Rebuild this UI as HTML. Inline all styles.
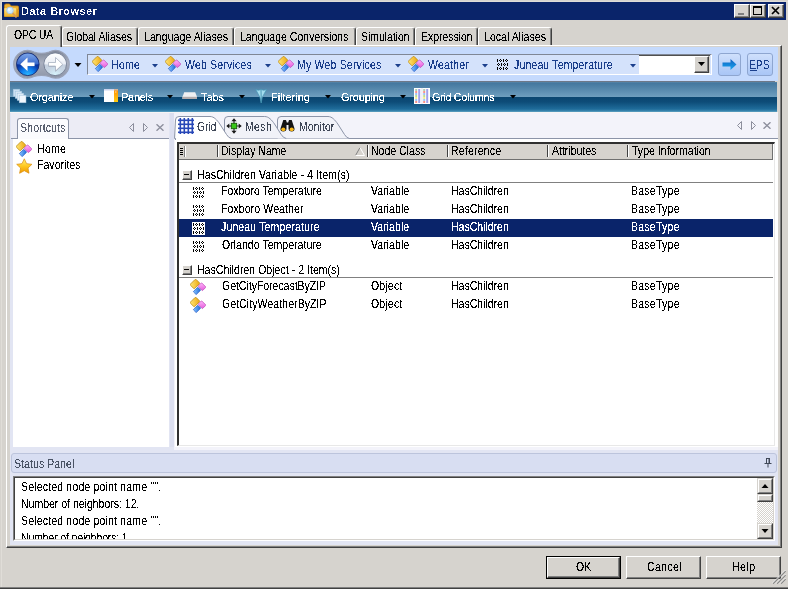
<!DOCTYPE html>
<html><head><meta charset="utf-8"><title>Data Browser</title>
<style>
html,body{margin:0;padding:0}
body{width:788px;height:590px;overflow:hidden;background:#d6d3ce;position:relative;font-family:"Liberation Sans",sans-serif;font-size:11px}
div,svg,span.t{position:absolute;box-sizing:border-box}
span.t{white-space:pre;line-height:13px;filter:url(#th)}
</style></head><body>
<svg width="0" height="0" style="left:0;top:0"><filter id="th" x="-0.05" y="-0.25" width="1.1" height="1.5" color-interpolation-filters="sRGB"><feComponentTransfer><feFuncA type="discrete" tableValues="0 0 0 0 0 0 0 0 0 1 1 1 1 1 1 1 1 1 1 1"/></feComponentTransfer></filter><filter id="th2" x="-0.05" y="-0.25" width="1.1" height="1.5" color-interpolation-filters="sRGB"><feComponentTransfer><feFuncA type="discrete" tableValues="0 0 0 0 0 0 0 0 0 0 0 0 1 1 1 1 1 1 1 1"/></feComponentTransfer></filter></svg>
<div style="left:1px;top:1px;width:787px;height:1px;background:#e0ddd8;"></div><div style="left:1px;top:1px;width:1px;height:586px;background:#e0ddd8;"></div><div style="left:2px;top:2px;width:784px;height:18px;background:#0a246a;"></div><svg style="left:3px;top:3px;" width="17" height="15" viewBox="0 0 17 15"><defs><linearGradient id="fo" x1="0" y1="0" x2="0" y2="1"><stop offset="0" stop-color="#ffe68a"/><stop offset="1" stop-color="#f0b028"/></linearGradient></defs>
<path d="M1.500 2.500q0 -1.500 1.500 -1.500h3.500l1.500 2h6.500q1 0 1 1v9.500h-14z" fill="#eeb030" stroke="#c88818" stroke-width="0.8"/>
<path d="M1.300 5.200h11.200l1.500 1v7.300h-12.700z" fill="url(#fo)"/>
<path d="M13.300 5.500l2.700 1.500l-1 6.500h-1.700z" fill="#e09a20"/>
<path d="M9.300 9.800l4.200 4.700" stroke="#d8985c" stroke-width="1.700"/>
<circle cx="7" cy="7.400" r="3.300" fill="#d2eafc" stroke="#a4c4e4" stroke-width="0.9"/>
<circle cx="6.200" cy="6.600" r="1.300" fill="#fff" opacity="0.8"/></svg><span class="t" style="left:21px;top:5px;font-size:11px;color:#fff;letter-spacing:0.447px;font-weight:700;filter:url(#th2);">Data Browser</span><div style="left:734px;top:4px;width:16px;height:14px;background:#d6d3ce;border-top:1px solid #fff;border-left:1px solid #fff;border-right:1px solid #404040;border-bottom:1px solid #404040;"></div><div style="left:735px;top:5px;width:14px;height:12px;border-right:1px solid #808080;border-bottom:1px solid #808080;"></div><svg style="left:734px;top:4px;" width="16" height="14" viewBox="0 0 16 14"><rect x="4" y="9" width="6" height="2" fill="#808080"/></svg><div style="left:750px;top:4px;width:16px;height:14px;background:#d6d3ce;border-top:1px solid #fff;border-left:1px solid #fff;border-right:1px solid #404040;border-bottom:1px solid #404040;"></div><div style="left:751px;top:5px;width:14px;height:12px;border-right:1px solid #808080;border-bottom:1px solid #808080;"></div><svg style="left:750px;top:4px;" width="16" height="14" viewBox="0 0 16 14"><rect x="3.5" y="3" width="8" height="7.5" fill="none" stroke="#000" stroke-width="1"/><rect x="3" y="2" width="9" height="2" fill="#000"/></svg><div style="left:768px;top:4px;width:16px;height:14px;background:#d6d3ce;border-top:1px solid #fff;border-left:1px solid #fff;border-right:1px solid #404040;border-bottom:1px solid #404040;"></div><div style="left:769px;top:5px;width:14px;height:12px;border-right:1px solid #808080;border-bottom:1px solid #808080;"></div><svg style="left:768px;top:4px;" width="16" height="14" viewBox="0 0 16 14"><path d="M4 3l7 7M11 3l-7 7" stroke="#000" stroke-width="1.7"/></svg><div style="left:6px;top:45px;width:776px;height:503px;background:#d6d3ce;border-top:1px solid #fff;border-left:1px solid #fff;border-right:1px solid #404040;border-bottom:1px solid #404040;"></div><div style="left:7px;top:46px;width:774px;height:501px;border-right:1px solid #808080;border-bottom:1px solid #808080;"></div><div style="left:6px;top:25px;width:56px;height:22px;background:#d6d3ce;border-top:1px solid #fff;border-left:1px solid #fff;border-right:1px solid #404040;border-radius:3px 3px 0 0;"></div><div style="left:7px;top:26px;width:54px;height:21px;border-right:1px solid #808080;border-radius:0 2px 0 0;"></div><span class="t" style="left:14px;top:29px;font-size:10.5px;color:#000;letter-spacing:-0.221px;transform:scaleY(1.19);transform-origin:0 10px;">OPC UA</span><div style="left:62px;top:27px;width:76px;height:18px;background:#d6d3ce;border-top:1px solid #fff;border-left:1px solid #fff;border-right:1px solid #404040;border-radius:3px 3px 0 0;"></div><div style="left:63px;top:28px;width:74px;height:17px;border-right:1px solid #808080;border-radius:0 2px 0 0;"></div><span class="t" style="left:66px;top:31px;font-size:10.5px;color:#000;letter-spacing:-0.044px;transform:scaleY(1.19);transform-origin:0 10px;">Global Aliases</span><div style="left:138px;top:27px;width:96px;height:18px;background:#d6d3ce;border-top:1px solid #fff;border-left:1px solid #fff;border-right:1px solid #404040;border-radius:3px 3px 0 0;"></div><div style="left:139px;top:28px;width:94px;height:17px;border-right:1px solid #808080;border-radius:0 2px 0 0;"></div><span class="t" style="left:144px;top:31px;font-size:10.5px;color:#000;letter-spacing:0.068px;transform:scaleY(1.19);transform-origin:0 10px;">Language Aliases</span><div style="left:234px;top:27px;width:122px;height:18px;background:#d6d3ce;border-top:1px solid #fff;border-left:1px solid #fff;border-right:1px solid #404040;border-radius:3px 3px 0 0;"></div><div style="left:235px;top:28px;width:120px;height:17px;border-right:1px solid #808080;border-radius:0 2px 0 0;"></div><span class="t" style="left:240px;top:31px;font-size:10.5px;color:#000;letter-spacing:0.021px;transform:scaleY(1.19);transform-origin:0 10px;">Language Conversions</span><div style="left:356px;top:27px;width:59px;height:18px;background:#d6d3ce;border-top:1px solid #fff;border-left:1px solid #fff;border-right:1px solid #404040;border-radius:3px 3px 0 0;"></div><div style="left:357px;top:28px;width:57px;height:17px;border-right:1px solid #808080;border-radius:0 2px 0 0;"></div><span class="t" style="left:361px;top:31px;font-size:10.5px;color:#000;letter-spacing:-0.048px;transform:scaleY(1.19);transform-origin:0 10px;">Simulation</span><div style="left:415px;top:27px;width:63px;height:18px;background:#d6d3ce;border-top:1px solid #fff;border-left:1px solid #fff;border-right:1px solid #404040;border-radius:3px 3px 0 0;"></div><div style="left:416px;top:28px;width:61px;height:17px;border-right:1px solid #808080;border-radius:0 2px 0 0;"></div><span class="t" style="left:421px;top:31px;font-size:10.5px;color:#000;letter-spacing:-0.028px;transform:scaleY(1.19);transform-origin:0 10px;">Expression</span><div style="left:478px;top:27px;width:74px;height:18px;background:#d6d3ce;border-top:1px solid #fff;border-left:1px solid #fff;border-right:1px solid #404040;border-radius:3px 3px 0 0;"></div><div style="left:479px;top:28px;width:72px;height:17px;border-right:1px solid #808080;border-radius:0 2px 0 0;"></div><span class="t" style="left:484px;top:31px;font-size:10.5px;color:#000;letter-spacing:0.053px;transform:scaleY(1.19);transform-origin:0 10px;">Local Aliases</span><div style="left:10px;top:47px;width:768px;height:34px;background:#c5dafd;"></div><div style="left:10px;top:81px;width:765px;height:1px;background:#6f7888;"></div><svg style="left:12px;top:49px;" width="60" height="31" viewBox="0 0 60 31">
<defs>
<radialGradient id="gb" cx="50%" cy="100%" r="75%"><stop offset="0" stop-color="#30c0ff"/><stop offset="0.4" stop-color="#1080f0"/><stop offset="0.75" stop-color="#0838a8"/><stop offset="1" stop-color="#082c90"/></radialGradient>
<linearGradient id="gbt" x1="0" y1="0" x2="0" y2="1"><stop offset="0" stop-color="#7aa4e8"/><stop offset="1" stop-color="#3464c8"/></linearGradient>
<radialGradient id="gf" cx="50%" cy="100%" r="75%"><stop offset="0" stop-color="#d8f6ff"/><stop offset="0.5" stop-color="#c8d6e4"/><stop offset="1" stop-color="#c4ccdc"/></radialGradient>
<linearGradient id="gft" x1="0" y1="0" x2="0" y2="1"><stop offset="0" stop-color="#ffffff"/><stop offset="1" stop-color="#e8ecf4"/></linearGradient>
<linearGradient id="gp" x1="0" y1="0" x2="0" y2="1"><stop offset="0" stop-color="#7c8496"/><stop offset="0.45" stop-color="#aab0c0"/><stop offset="1" stop-color="#8c94a6"/></linearGradient>
</defs>
<path d="M22 3.100Q29.500 5.500 37 3.100A13.800 13.800 0 1 1 37 27.500Q29.500 25.100 22 27.500A13.800 13.800 0 1 1 22 3.100Z" fill="url(#gp)" stroke="#9aa2b6" stroke-width="1.200"/>
<circle cx="15.800" cy="15.300" r="11.300" fill="url(#gb)" stroke="#1a2e70" stroke-width="0.9"/>
<path d="M5 15.300a10.800 10.800 0 0 1 21.600 0q-10.800 1.200 -21.600 0z" fill="url(#gbt)"/>
<circle cx="43.200" cy="15.300" r="11.300" fill="url(#gf)" stroke="#707a90" stroke-width="0.9"/>
<path d="M32.400 15.300a10.800 10.800 0 0 1 21.600 0q-10.800 1.200 -21.600 0z" fill="url(#gft)"/>
<path d="M8.300 15.700l7.200 -6.800v5h7v3.600h-7v5z" fill="#8090b0" opacity="0.5"/>
<path d="M8.300 15.300l7.200 -6.800v5h7v3.600h-7v5z" fill="#fff"/>
<path d="M50.700 15.900l-7.200 -6.800v5h-7v3.600h7v5z" fill="#98a2b4" opacity="0.8"/>
<path d="M50.700 15.300l-7.200 -6.800v5h-7v3.600h7v5z" fill="#fff" stroke="#aab2c2" stroke-width="0.8"/>
</svg><svg style="left:74px;top:63px;" width="8" height="5" viewBox="0 0 8 5"><path d="M0.500 0h7l-3.500 4z" fill="#000"/></svg><div style="left:87px;top:54px;width:625px;height:21px;background:#d4e2fb;border-top:1px solid #7f8796;border-left:1px solid #7f8796;border-bottom:1px solid #fff;border-right:1px solid #fff;"></div><svg style="left:92px;top:56px;" width="16" height="16" viewBox="0 0 16 16">
<defs><linearGradient id="wy" x1="0" y1="0" x2="1" y2="0.600"><stop offset="0" stop-color="#ffe878"/><stop offset="1" stop-color="#f0b020"/></linearGradient>
<linearGradient id="wp" x1="0" y1="0" x2="1" y2="0.600"><stop offset="0" stop-color="#ffb8fc"/><stop offset="1" stop-color="#e868e0"/></linearGradient>
<linearGradient id="wb" x1="0" y1="0" x2="1" y2="0.600"><stop offset="0" stop-color="#88c4ff"/><stop offset="1" stop-color="#2c78e0"/></linearGradient></defs>
<rect x="-3.200" y="-2.100" width="6.400" height="4.200" rx="0.5" transform="translate(7 11.900) rotate(-45)" fill="url(#wb)" stroke="#1c50c0" stroke-width="0.6"/>
<rect x="-3.150" y="-2.500" width="6.300" height="5" rx="0.5" transform="translate(12 7.700) rotate(45)" fill="url(#wp)" stroke="#b838b0" stroke-width="0.6"/>
<rect x="-4.050" y="-3.050" width="8.100" height="6.100" rx="1" transform="translate(4.900 4.950) rotate(-45)" fill="url(#wy)" stroke="#b88408" stroke-width="0.7"/>
</svg><span class="t" style="left:111px;top:59px;font-size:10.5px;color:#1b3f8c;letter-spacing:0.294px;transform:scaleY(1.19);transform-origin:0 10px;">Home</span><svg style="left:151.5px;top:64px;" width="6" height="4" viewBox="0 0 6 4"><path d="M0 0h6l-3 3.500z" fill="#1b3f8c"/></svg><svg style="left:165px;top:56px;" width="16" height="16" viewBox="0 0 16 16">
<defs><linearGradient id="wy" x1="0" y1="0" x2="1" y2="0.600"><stop offset="0" stop-color="#ffe878"/><stop offset="1" stop-color="#f0b020"/></linearGradient>
<linearGradient id="wp" x1="0" y1="0" x2="1" y2="0.600"><stop offset="0" stop-color="#ffb8fc"/><stop offset="1" stop-color="#e868e0"/></linearGradient>
<linearGradient id="wb" x1="0" y1="0" x2="1" y2="0.600"><stop offset="0" stop-color="#88c4ff"/><stop offset="1" stop-color="#2c78e0"/></linearGradient></defs>
<rect x="-3.200" y="-2.100" width="6.400" height="4.200" rx="0.5" transform="translate(7 11.900) rotate(-45)" fill="url(#wb)" stroke="#1c50c0" stroke-width="0.6"/>
<rect x="-3.150" y="-2.500" width="6.300" height="5" rx="0.5" transform="translate(12 7.700) rotate(45)" fill="url(#wp)" stroke="#b838b0" stroke-width="0.6"/>
<rect x="-4.050" y="-3.050" width="8.100" height="6.100" rx="1" transform="translate(4.900 4.950) rotate(-45)" fill="url(#wy)" stroke="#b88408" stroke-width="0.7"/>
</svg><span class="t" style="left:185px;top:59px;font-size:10.5px;color:#1b3f8c;letter-spacing:0.197px;transform:scaleY(1.19);transform-origin:0 10px;">Web Services</span><svg style="left:265px;top:64px;" width="6" height="4" viewBox="0 0 6 4"><path d="M0 0h6l-3 3.500z" fill="#1b3f8c"/></svg><svg style="left:278px;top:56px;" width="16" height="16" viewBox="0 0 16 16">
<defs><linearGradient id="wy" x1="0" y1="0" x2="1" y2="0.600"><stop offset="0" stop-color="#ffe878"/><stop offset="1" stop-color="#f0b020"/></linearGradient>
<linearGradient id="wp" x1="0" y1="0" x2="1" y2="0.600"><stop offset="0" stop-color="#ffb8fc"/><stop offset="1" stop-color="#e868e0"/></linearGradient>
<linearGradient id="wb" x1="0" y1="0" x2="1" y2="0.600"><stop offset="0" stop-color="#88c4ff"/><stop offset="1" stop-color="#2c78e0"/></linearGradient></defs>
<rect x="-3.200" y="-2.100" width="6.400" height="4.200" rx="0.5" transform="translate(7 11.900) rotate(-45)" fill="url(#wb)" stroke="#1c50c0" stroke-width="0.6"/>
<rect x="-3.150" y="-2.500" width="6.300" height="5" rx="0.5" transform="translate(12 7.700) rotate(45)" fill="url(#wp)" stroke="#b838b0" stroke-width="0.6"/>
<rect x="-4.050" y="-3.050" width="8.100" height="6.100" rx="1" transform="translate(4.900 4.950) rotate(-45)" fill="url(#wy)" stroke="#b88408" stroke-width="0.7"/>
</svg><span class="t" style="left:297px;top:59px;font-size:10.5px;color:#1b3f8c;letter-spacing:0.201px;transform:scaleY(1.19);transform-origin:0 10px;">My Web Services</span><svg style="left:395px;top:64px;" width="6" height="4" viewBox="0 0 6 4"><path d="M0 0h6l-3 3.500z" fill="#1b3f8c"/></svg><svg style="left:408px;top:56px;" width="16" height="16" viewBox="0 0 16 16">
<defs><linearGradient id="wy" x1="0" y1="0" x2="1" y2="0.600"><stop offset="0" stop-color="#ffe878"/><stop offset="1" stop-color="#f0b020"/></linearGradient>
<linearGradient id="wp" x1="0" y1="0" x2="1" y2="0.600"><stop offset="0" stop-color="#ffb8fc"/><stop offset="1" stop-color="#e868e0"/></linearGradient>
<linearGradient id="wb" x1="0" y1="0" x2="1" y2="0.600"><stop offset="0" stop-color="#88c4ff"/><stop offset="1" stop-color="#2c78e0"/></linearGradient></defs>
<rect x="-3.200" y="-2.100" width="6.400" height="4.200" rx="0.5" transform="translate(7 11.900) rotate(-45)" fill="url(#wb)" stroke="#1c50c0" stroke-width="0.6"/>
<rect x="-3.150" y="-2.500" width="6.300" height="5" rx="0.5" transform="translate(12 7.700) rotate(45)" fill="url(#wp)" stroke="#b838b0" stroke-width="0.6"/>
<rect x="-4.050" y="-3.050" width="8.100" height="6.100" rx="1" transform="translate(4.900 4.950) rotate(-45)" fill="url(#wy)" stroke="#b88408" stroke-width="0.7"/>
</svg><span class="t" style="left:428px;top:59px;font-size:10.5px;color:#1b3f8c;letter-spacing:0.209px;transform:scaleY(1.19);transform-origin:0 10px;">Weather</span><svg style="left:481.5px;top:64px;" width="6" height="4" viewBox="0 0 6 4"><path d="M0 0h6l-3 3.500z" fill="#1b3f8c"/></svg><svg style="left:497px;top:59px;" width="11" height="11" viewBox="0 0 11 11"><g fill="#000" shape-rendering="crispEdges"><rect x="0" y="0" width="1" height="3"/><rect x="3" y="0" width="1" height="1"/><rect x="2" y="1" width="1" height="1"/><rect x="4" y="1" width="1" height="1"/><rect x="3" y="2" width="1" height="1"/><rect x="6" y="0" width="1" height="3"/><rect x="9" y="0" width="1" height="1"/><rect x="8" y="1" width="1" height="1"/><rect x="10" y="1" width="1" height="1"/><rect x="9" y="2" width="1" height="1"/><rect x="0" y="8" width="1" height="3"/><rect x="3" y="8" width="1" height="1"/><rect x="2" y="9" width="1" height="1"/><rect x="4" y="9" width="1" height="1"/><rect x="3" y="10" width="1" height="1"/><rect x="6" y="8" width="1" height="3"/><rect x="9" y="8" width="1" height="1"/><rect x="8" y="9" width="1" height="1"/><rect x="10" y="9" width="1" height="1"/><rect x="9" y="10" width="1" height="1"/><rect x="1" y="4" width="1" height="1"/><rect x="0" y="5" width="1" height="1"/><rect x="2" y="5" width="1" height="1"/><rect x="1" y="6" width="1" height="1"/><rect x="4" y="4" width="1" height="3"/><rect x="7" y="4" width="1" height="1"/><rect x="6" y="5" width="1" height="1"/><rect x="8" y="5" width="1" height="1"/><rect x="7" y="6" width="1" height="1"/><rect x="10" y="4" width="1" height="3"/></g></svg><span class="t" style="left:514px;top:59px;font-size:10.5px;color:#1b3f8c;letter-spacing:0.152px;transform:scaleY(1.19);transform-origin:0 10px;">Juneau Temperature</span><svg style="left:629.6px;top:64px;" width="6" height="4" viewBox="0 0 6 4"><path d="M0 0h6l-3 3.500z" fill="#1b3f8c"/></svg><div style="left:639px;top:55px;width:71px;height:19px;background:#fff;"></div><div style="left:639px;top:55px;width:71px;height:1px;background:#505050;"></div><div style="left:709px;top:56px;width:1px;height:17px;background:#d6d3ce;"></div><div style="left:694px;top:56px;width:15px;height:17px;background:#d6d3ce;border-top:1px solid #fff;border-left:1px solid #fff;border-right:1px solid #404040;border-bottom:1px solid #404040;"></div><div style="left:695px;top:57px;width:13px;height:15px;border-right:1px solid #808080;border-bottom:1px solid #808080;"></div><svg style="left:698px;top:62px;" width="7" height="4" viewBox="0 0 7 4"><path d="M0 0h7l-3.500 4z" fill="#000"/></svg><div style="left:718px;top:53px;width:23px;height:23px;border:1px solid #8ea6d0;border-radius:3px;background:linear-gradient(#cfe0fc,#bcd2f8 50%,#a9c6f6);"></div><div style="left:747px;top:53px;width:26px;height:23px;border:1px solid #8ea6d0;border-radius:3px;background:linear-gradient(#cfe0fc,#bcd2f8 50%,#a9c6f6);"></div><svg style="left:722px;top:58px;" width="15" height="13" viewBox="0 0 15 13"><defs><linearGradient id="ga" x1="0" y1="0" x2="0" y2="1"><stop offset="0" stop-color="#1060c0"/><stop offset="1" stop-color="#18a8f0"/></linearGradient></defs><path d="M0.500 4.500h8v-3.500l6 5.500l-6 5.500v-3.500h-8z" fill="url(#ga)"/></svg><span class="t" style="left:749px;top:59px;font-size:10.5px;color:#1b3f8c;letter-spacing:-0.153px;transform:scaleY(1.19);transform-origin:0 10px;">EPS</span><div style="left:750px;top:70px;width:7px;height:1px;background:#1b3f8c;"></div><div style="left:10px;top:82px;width:767px;height:30px;background:linear-gradient(to bottom,#5d8aac 0,#44779e 1px,#4c7fa5 4px,#6f9fbf 15px,#0b4670 15px,#0d4c78 20px,#1f6c9a 27px,#3a86ae 29px,#68a6c6 30px);"></div><svg style="left:12px;top:88px;" width="16" height="16" viewBox="0 0 16 16"><g stroke="#9cc0dc" stroke-width="0.5"><rect x="1.200" y="1.200" width="6.600" height="7.200" fill="#cce0f3"/>
<rect x="3.200" y="3.200" width="6.600" height="7.200" fill="#d6e7f6"/>
<rect x="5.200" y="5.200" width="6.600" height="7.200" fill="#e2eef9"/>
<rect x="7.200" y="7.200" width="6.800" height="7.600" fill="#f1f7fd"/></g></svg><span class="t" style="left:30px;top:91px;font-size:11px;color:#fff;letter-spacing:-0.181px;">Organize</span><svg style="left:88.6px;top:95px;" width="6" height="4" viewBox="0 0 6 4"><path d="M0 0h6l-3 3.500z" fill="#000"/></svg><svg style="left:104px;top:89px;" width="14" height="13" viewBox="0 0 14 13"><defs><linearGradient id="po" x1="0" y1="0" x2="0" y2="1"><stop offset="0" stop-color="#ff8c00"/><stop offset="1" stop-color="#ffcc10"/></linearGradient></defs>
<rect x="0" y="0" width="14" height="13" fill="#fff"/><rect x="0" y="0" width="14" height="1.500" fill="#ccd4ee"/>
<rect x="10" y="0" width="4" height="13" fill="url(#po)"/><rect x="10" y="0" width="4" height="1.500" fill="#d8b496"/><rect x="11" y="2.500" width="1.500" height="1" fill="#ffe0b0"/></svg><span class="t" style="left:121px;top:91px;font-size:11px;color:#fff;letter-spacing:-0.277px;">Panels</span><svg style="left:167px;top:95px;" width="6" height="4" viewBox="0 0 6 4"><path d="M0 0h6l-3 3.500z" fill="#000"/></svg><svg style="left:182px;top:92px;" width="16" height="8" viewBox="0 0 16 8"><path d="M2.200 0.300h11l1.800 4.500v2.200h-14.500v-2.200z" fill="#f0f0f2"/><path d="M0.500 4.800h14.500v2.200h-14.500z" fill="#b4acac"/></svg><span class="t" style="left:201px;top:91px;font-size:11px;color:#fff;letter-spacing:-0.062px;">Tabs</span><svg style="left:238.5px;top:95px;" width="6" height="4" viewBox="0 0 6 4"><path d="M0 0h6l-3 3.500z" fill="#000"/></svg><svg style="left:255px;top:88px;" width="13" height="16" viewBox="0 0 13 16"><path d="M0.800 1.500q2.500 1.500 5.200 0q2.700 1.500 5.500 0l-4.300 8l-1 5.500l-1.200 -5.500z" fill="#a4dcee" stroke="#4898b8" stroke-width="0.7"/><path d="M6 1.500l0.300 13.500" stroke="#3888a8" stroke-width="0.8"/></svg><span class="t" style="left:271px;top:91px;font-size:11px;color:#fff;letter-spacing:-0.032px;">Filtering</span><svg style="left:324.5px;top:95px;" width="6" height="4" viewBox="0 0 6 4"><path d="M0 0h6l-3 3.500z" fill="#000"/></svg><span class="t" style="left:341px;top:91px;font-size:11px;color:#fff;letter-spacing:-0.191px;">Grouping</span><svg style="left:399.5px;top:95px;" width="6" height="4" viewBox="0 0 6 4"><path d="M0 0h6l-3 3.500z" fill="#000"/></svg><svg style="left:414px;top:88px;" width="16" height="16" viewBox="0 0 16 16"><rect x="0" y="0" width="16" height="16" fill="#fff"/><rect x="7.500" y="0" width="1" height="16" fill="#e4e4ec"/><rect x="1.2" y="1.5" width="2" height="1" fill="#60a068"/><rect x="9.2" y="1.5" width="2" height="1" fill="#60a068"/><rect x="4.2" y="1.5" width="2" height="1" fill="#4444d8"/><rect x="12.2" y="1.5" width="2" height="1" fill="#4444d8"/><rect x="1.2" y="3.5" width="2" height="1" fill="#f02010"/><rect x="9.2" y="3.5" width="2" height="1" fill="#f02010"/><rect x="4.2" y="3.5" width="2" height="1" fill="#4444d8"/><rect x="12.2" y="3.5" width="2" height="1" fill="#4444d8"/><rect x="1.2" y="5.5" width="2" height="1" fill="#4080e8"/><rect x="9.2" y="5.5" width="2" height="1" fill="#4080e8"/><rect x="4.2" y="5.5" width="2" height="1" fill="#4444d8"/><rect x="12.2" y="5.5" width="2" height="1" fill="#4444d8"/><rect x="1.2" y="7.5" width="2" height="1" fill="#80c020"/><rect x="9.2" y="7.5" width="2" height="1" fill="#80c020"/><rect x="4.2" y="7.5" width="2" height="1" fill="#4444d8"/><rect x="12.2" y="7.5" width="2" height="1" fill="#4444d8"/><rect x="1.2" y="9.5" width="2" height="1" fill="#e8d820"/><rect x="9.2" y="9.5" width="2" height="1" fill="#e8d820"/><rect x="4.2" y="9.5" width="2" height="1" fill="#4444d8"/><rect x="12.2" y="9.5" width="2" height="1" fill="#4444d8"/><rect x="1.2" y="11.5" width="2" height="1" fill="#4090e8"/><rect x="9.2" y="11.5" width="2" height="1" fill="#4090e8"/><rect x="4.2" y="11.5" width="2" height="1" fill="#4444d8"/><rect x="12.2" y="11.5" width="2" height="1" fill="#4444d8"/><rect x="1.2" y="13.5" width="2" height="1" fill="#f02010"/><rect x="9.2" y="13.5" width="2" height="1" fill="#f02010"/><rect x="4.2" y="13.5" width="2" height="1" fill="#4444d8"/><rect x="12.2" y="13.5" width="2" height="1" fill="#4444d8"/></svg><span class="t" style="left:432px;top:91px;font-size:11px;color:#fff;letter-spacing:-0.404px;">Grid Columns</span><svg style="left:509.5px;top:95px;" width="6" height="4" viewBox="0 0 6 4"><path d="M0 0h6l-3 3.500z" fill="#000"/></svg><div style="left:10px;top:112px;width:768px;height:433px;background:#e2e5f3;"></div><div style="left:10px;top:112px;width:768px;height:1px;background:#f6f4f4;"></div><div style="left:11px;top:113px;width:158px;height:26px;background:#ececf5;"></div><div style="left:174px;top:113px;width:604px;height:337px;background:#f3f3fa;"></div><div style="left:11px;top:138px;width:158px;height:1px;background:#8c94a8;"></div><div style="left:17px;top:118px;width:52px;height:21px;background:#fbfbfe;border:1px solid #8c94a8;border-bottom:none;border-radius:3px 3px 0 0;"></div><span class="t" style="left:20px;top:122px;font-size:10.5px;color:#5a6070;letter-spacing:0.143px;transform:scaleY(1.19);transform-origin:0 10px;">Shortcuts</span><svg style="left:129px;top:123.0px;" width="5" height="9" viewBox="0 0 5 9"><path d="M4.500 0.500v8l-4 -4z" fill="none" stroke="#8c8e9c" stroke-width="1"/></svg><svg style="left:143px;top:123.0px;" width="5" height="9" viewBox="0 0 5 9"><path d="M0.500 0.500v8l4 -4z" fill="none" stroke="#8c8e9c" stroke-width="1"/></svg><svg style="left:156.2px;top:124.0px;" width="8" height="7" viewBox="0 0 8 7"><path d="M0.500 0.300l7 6.400M7.500 0.300l-7 6.400" stroke="#8c8e9c" stroke-width="1.400"/></svg><div style="left:13px;top:139px;width:156px;height:308px;background:#fff;"></div><svg style="left:16px;top:141px;" width="16" height="16" viewBox="0 0 16 16">
<defs><linearGradient id="wy" x1="0" y1="0" x2="1" y2="0.600"><stop offset="0" stop-color="#ffe878"/><stop offset="1" stop-color="#f0b020"/></linearGradient>
<linearGradient id="wp" x1="0" y1="0" x2="1" y2="0.600"><stop offset="0" stop-color="#ffb8fc"/><stop offset="1" stop-color="#e868e0"/></linearGradient>
<linearGradient id="wb" x1="0" y1="0" x2="1" y2="0.600"><stop offset="0" stop-color="#88c4ff"/><stop offset="1" stop-color="#2c78e0"/></linearGradient></defs>
<rect x="-3.200" y="-2.100" width="6.400" height="4.200" rx="0.5" transform="translate(7 11.900) rotate(-45)" fill="url(#wb)" stroke="#1c50c0" stroke-width="0.6"/>
<rect x="-3.150" y="-2.500" width="6.300" height="5" rx="0.5" transform="translate(12 7.700) rotate(45)" fill="url(#wp)" stroke="#b838b0" stroke-width="0.6"/>
<rect x="-4.050" y="-3.050" width="8.100" height="6.100" rx="1" transform="translate(4.900 4.950) rotate(-45)" fill="url(#wy)" stroke="#b88408" stroke-width="0.7"/>
</svg><span class="t" style="left:37px;top:143px;font-size:10.5px;color:#000;letter-spacing:0.294px;transform:scaleY(1.19);transform-origin:0 10px;">Home</span><svg style="left:16px;top:157.5px;" width="17" height="17" viewBox="0 0 17 17"><defs><linearGradient id="st" x1="0" y1="0" x2="0" y2="1"><stop offset="0" stop-color="#fff27a"/><stop offset="0.5" stop-color="#ffc820"/><stop offset="1" stop-color="#f09800"/></linearGradient></defs><path d="M8.30 0.80L10.59 5.64L15.91 6.33L12.01 10.01L13.00 15.27L8.30 12.70L3.60 15.27L4.59 10.01L0.69 6.33L6.01 5.64z" fill="url(#st)" stroke="#d88c10" stroke-width="0.7" stroke-linejoin="round"/></svg><span class="t" style="left:37px;top:159px;font-size:10.5px;color:#000;letter-spacing:0.053px;transform:scaleY(1.19);transform-origin:0 10px;">Favorites</span><div style="left:170px;top:113px;width:4px;height:334px;background:#dcdff0;"></div><div style="left:175px;top:138px;width:603px;height:1px;background:#8c94a8;"></div><div style="left:175px;top:139px;width:603px;height:308px;background:#fff;"></div><svg style="left:174px;top:114px;" width="190" height="26" viewBox="0 0 190 26">
<path d="M103.5 24.500L103.5 6Q103.5 2.500 107.0 2.500L154 2.500C158 2.500 161 6 163.8 10L170.5 20.500Q172.5 24 175.5 24.500" fill="#f1f2f8" stroke="#8c94a8" stroke-width="1"/>
<path d="M50.5 24.500L50.5 6Q50.5 2.500 54.0 2.500L90.7 2.500C94.7 2.500 97.7 6 100.5 10L107.2 20.500Q109.2 24 112.2 24.500" fill="#f1f2f8" stroke="#8c94a8" stroke-width="1"/>
<path d="M1.5 24.500L1.5 6Q1.5 2.500 5.0 2.500L36 2.500C40 2.500 43 6 45.8 10L52.5 20.500Q54.5 24 57.5 24.500L57.500 26L1.500 26z" fill="#fff" stroke="none"/>
<path d="M1.500 26L1.500 24.5001.5 24.500L1.5 6Q1.5 2.500 5.0 2.500L36 2.500C40 2.500 43 6 45.8 10L52.5 20.500Q54.5 24 57.5 24.500" fill="none" stroke="#8c94a8" stroke-width="1"/>
</svg><svg style="left:178px;top:118px;" width="16" height="16" viewBox="0 0 16 16"><rect x="1.5" y="0" width="1.600" height="16" fill="#2848b8"/><rect x="0" y="1.5" width="16" height="1.600" fill="#2848b8"/><rect x="5.5" y="0" width="1.600" height="16" fill="#2848b8"/><rect x="0" y="5.5" width="16" height="1.600" fill="#2848b8"/><rect x="9.5" y="0" width="1.600" height="16" fill="#2848b8"/><rect x="0" y="9.5" width="16" height="1.600" fill="#2848b8"/><rect x="13.5" y="0" width="1.600" height="16" fill="#2848b8"/><rect x="0" y="13.5" width="16" height="1.600" fill="#2848b8"/></svg><span class="t" style="left:197px;top:121px;font-size:10.5px;color:#404858;letter-spacing:-0.166px;transform:scaleY(1.19);transform-origin:0 10px;">Grid</span><svg style="left:226px;top:118px;" width="16" height="16" viewBox="0 0 16 16"><path d="M8 0.300l2.600 3h-5.200zM8 15.700l2.600 -3h-5.200zM0.300 8l3 -2.600v5.200zM15.700 8l-3 -2.600v5.200z" fill="#181818"/>
<path d="M8 3v10M3 8h10" stroke="#181818" stroke-width="1.100"/><rect x="5.300" y="5.300" width="5.400" height="5.400" fill="#38c818" stroke="#186008" stroke-width="0.9"/></svg><span class="t" style="left:245px;top:121px;font-size:10.5px;color:#404858;letter-spacing:0.371px;transform:scaleY(1.19);transform-origin:0 10px;">Mesh</span><svg style="left:280px;top:119px;" width="16" height="14" viewBox="0 0 16 14"><path d="M3.300 1h2.700l0.800 2.500h1.400l0.800 -2.500h2.700l2.800 8.500q0.300 3 -2.800 3t-3.200 -3v-3.500h-2v3.500q0 3 -3.200 3t-2.800 -3z" fill="#141414"/>
<ellipse cx="3.300" cy="10.300" rx="2" ry="1.900" fill="#f8b818"/><ellipse cx="11.700" cy="10.300" rx="2" ry="1.900" fill="#f8b818"/></svg><span class="t" style="left:299px;top:121px;font-size:10.5px;color:#404858;letter-spacing:0.047px;transform:scaleY(1.19);transform-origin:0 10px;">Monitor</span><svg style="left:736.5px;top:121.0px;" width="5" height="9" viewBox="0 0 5 9"><path d="M4.500 0.500v8l-4 -4z" fill="none" stroke="#8c8e9c" stroke-width="1"/></svg><svg style="left:750.5px;top:121.0px;" width="5" height="9" viewBox="0 0 5 9"><path d="M0.500 0.500v8l4 -4z" fill="none" stroke="#8c8e9c" stroke-width="1"/></svg><svg style="left:763.2px;top:122.0px;" width="8" height="7" viewBox="0 0 8 7"><path d="M0.500 0.300l7 6.400M7.500 0.300l-7 6.400" stroke="#8c8e9c" stroke-width="1.400"/></svg><div style="left:177px;top:142px;width:598px;height:304px;background:#fff;border-top:2px solid #303030;border-left:2px solid #303030;border-right:1px solid #e8e8e8;border-bottom:1px solid #e8e8e8;"></div><div style="left:179px;top:144px;width:594px;height:16px;background:#d6d3ce;border-bottom:1px solid #707070;border-right:1px solid #707070;"></div><div style="left:180px;top:148px;width:3px;height:1px;background:#000;"></div><div style="left:180px;top:150px;width:3px;height:1px;background:#000;"></div><div style="left:180px;top:152px;width:3px;height:1px;background:#000;"></div><div style="left:180px;top:154px;width:3px;height:1px;background:#000;"></div><div style="left:184px;top:146px;width:1px;height:11px;background:#808080;"></div><div style="left:185px;top:146px;width:1px;height:11px;background:#fff;"></div><div style="left:217px;top:145px;width:1px;height:12px;background:#404040;"></div><div style="left:218px;top:145px;width:1px;height:12px;background:#fff;"></div><div style="left:367px;top:145px;width:1px;height:12px;background:#404040;"></div><div style="left:368px;top:145px;width:1px;height:12px;background:#fff;"></div><div style="left:447px;top:145px;width:1px;height:12px;background:#404040;"></div><div style="left:448px;top:145px;width:1px;height:12px;background:#fff;"></div><div style="left:547px;top:145px;width:1px;height:12px;background:#404040;"></div><div style="left:548px;top:145px;width:1px;height:12px;background:#fff;"></div><div style="left:627px;top:145px;width:1px;height:12px;background:#404040;"></div><div style="left:628px;top:145px;width:1px;height:12px;background:#fff;"></div><span class="t" style="left:221px;top:145px;font-size:10.5px;color:#000;letter-spacing:0.003px;transform:scaleY(1.19);transform-origin:0 10px;">Display Name</span><span class="t" style="left:371px;top:145px;font-size:10.5px;color:#000;letter-spacing:0.025px;transform:scaleY(1.19);transform-origin:0 10px;">Node Class</span><span class="t" style="left:451px;top:145px;font-size:10.5px;color:#000;letter-spacing:0.193px;transform:scaleY(1.19);transform-origin:0 10px;">Reference</span><span class="t" style="left:552px;top:145px;font-size:10.5px;color:#000;letter-spacing:-0.000px;transform:scaleY(1.19);transform-origin:0 10px;">Attributes</span><span class="t" style="left:632px;top:145px;font-size:10.5px;color:#000;letter-spacing:0.029px;transform:scaleY(1.19);transform-origin:0 10px;">Type Information</span><svg style="left:355px;top:147px;" width="10" height="9" viewBox="0 0 10 9"><path d="M0.500 8.500L5 0.500" stroke="#808080" stroke-width="1"/><path d="M5 0.500L9.500 8.500H0.500" fill="none" stroke="#fff" stroke-width="1"/></svg><div style="left:182px;top:170px;width:10px;height:10px;background:#d6d3ce;border-top:1px solid #fff;border-left:1px solid #fff;border-right:1px solid #404040;border-bottom:1px solid #404040;"></div><div style="left:183px;top:171px;width:8px;height:8px;border-right:1px solid #808080;border-bottom:1px solid #808080;"></div><div style="left:184px;top:174px;width:5px;height:1px;background:#000;"></div><span class="t" style="left:197px;top:169px;font-size:10.5px;color:#000;letter-spacing:0.103px;transform:scaleY(1.19);transform-origin:0 10px;">HasChildren Variable - 4 Item(s)</span><div style="left:179px;top:182px;width:594px;height:1px;background:#808080;"></div><svg style="left:193px;top:187px;" width="11" height="11" viewBox="0 0 11 11"><g fill="#000" shape-rendering="crispEdges"><rect x="0" y="0" width="1" height="3"/><rect x="3" y="0" width="1" height="1"/><rect x="2" y="1" width="1" height="1"/><rect x="4" y="1" width="1" height="1"/><rect x="3" y="2" width="1" height="1"/><rect x="6" y="0" width="1" height="3"/><rect x="9" y="0" width="1" height="1"/><rect x="8" y="1" width="1" height="1"/><rect x="10" y="1" width="1" height="1"/><rect x="9" y="2" width="1" height="1"/><rect x="0" y="8" width="1" height="3"/><rect x="3" y="8" width="1" height="1"/><rect x="2" y="9" width="1" height="1"/><rect x="4" y="9" width="1" height="1"/><rect x="3" y="10" width="1" height="1"/><rect x="6" y="8" width="1" height="3"/><rect x="9" y="8" width="1" height="1"/><rect x="8" y="9" width="1" height="1"/><rect x="10" y="9" width="1" height="1"/><rect x="9" y="10" width="1" height="1"/><rect x="1" y="4" width="1" height="1"/><rect x="0" y="5" width="1" height="1"/><rect x="2" y="5" width="1" height="1"/><rect x="1" y="6" width="1" height="1"/><rect x="4" y="4" width="1" height="3"/><rect x="7" y="4" width="1" height="1"/><rect x="6" y="5" width="1" height="1"/><rect x="8" y="5" width="1" height="1"/><rect x="7" y="6" width="1" height="1"/><rect x="10" y="4" width="1" height="3"/></g></svg><span class="t" style="left:221px;top:185px;font-size:10.5px;color:#000;letter-spacing:0.039px;transform:scaleY(1.19);transform-origin:0 10px;">Foxboro Temperature</span><span class="t" style="left:371px;top:185px;font-size:10.5px;color:#000;letter-spacing:0.056px;transform:scaleY(1.19);transform-origin:0 10px;">Variable</span><span class="t" style="left:451px;top:185px;font-size:10.5px;color:#000;letter-spacing:0.001px;transform:scaleY(1.19);transform-origin:0 10px;">HasChildren</span><span class="t" style="left:631px;top:185px;font-size:10.5px;color:#000;letter-spacing:0.256px;transform:scaleY(1.19);transform-origin:0 10px;">BaseType</span><svg style="left:193px;top:205px;" width="11" height="11" viewBox="0 0 11 11"><g fill="#000" shape-rendering="crispEdges"><rect x="0" y="0" width="1" height="3"/><rect x="3" y="0" width="1" height="1"/><rect x="2" y="1" width="1" height="1"/><rect x="4" y="1" width="1" height="1"/><rect x="3" y="2" width="1" height="1"/><rect x="6" y="0" width="1" height="3"/><rect x="9" y="0" width="1" height="1"/><rect x="8" y="1" width="1" height="1"/><rect x="10" y="1" width="1" height="1"/><rect x="9" y="2" width="1" height="1"/><rect x="0" y="8" width="1" height="3"/><rect x="3" y="8" width="1" height="1"/><rect x="2" y="9" width="1" height="1"/><rect x="4" y="9" width="1" height="1"/><rect x="3" y="10" width="1" height="1"/><rect x="6" y="8" width="1" height="3"/><rect x="9" y="8" width="1" height="1"/><rect x="8" y="9" width="1" height="1"/><rect x="10" y="9" width="1" height="1"/><rect x="9" y="10" width="1" height="1"/><rect x="1" y="4" width="1" height="1"/><rect x="0" y="5" width="1" height="1"/><rect x="2" y="5" width="1" height="1"/><rect x="1" y="6" width="1" height="1"/><rect x="4" y="4" width="1" height="3"/><rect x="7" y="4" width="1" height="1"/><rect x="6" y="5" width="1" height="1"/><rect x="8" y="5" width="1" height="1"/><rect x="7" y="6" width="1" height="1"/><rect x="10" y="4" width="1" height="3"/></g></svg><span class="t" style="left:221px;top:203px;font-size:10.5px;color:#000;letter-spacing:0.112px;transform:scaleY(1.19);transform-origin:0 10px;">Foxboro Weather</span><span class="t" style="left:371px;top:203px;font-size:10.5px;color:#000;letter-spacing:0.056px;transform:scaleY(1.19);transform-origin:0 10px;">Variable</span><span class="t" style="left:451px;top:203px;font-size:10.5px;color:#000;letter-spacing:0.001px;transform:scaleY(1.19);transform-origin:0 10px;">HasChildren</span><span class="t" style="left:631px;top:203px;font-size:10.5px;color:#000;letter-spacing:0.256px;transform:scaleY(1.19);transform-origin:0 10px;">BaseType</span><div style="left:179px;top:219px;width:594px;height:18px;background:#0a246a;"></div><div style="left:192px;top:222px;width:13px;height:13px;background:#fff;"></div><svg style="left:193px;top:223px;" width="11" height="11" viewBox="0 0 11 11"><g fill="#000" shape-rendering="crispEdges"><rect x="0" y="0" width="1" height="3"/><rect x="3" y="0" width="1" height="1"/><rect x="2" y="1" width="1" height="1"/><rect x="4" y="1" width="1" height="1"/><rect x="3" y="2" width="1" height="1"/><rect x="6" y="0" width="1" height="3"/><rect x="9" y="0" width="1" height="1"/><rect x="8" y="1" width="1" height="1"/><rect x="10" y="1" width="1" height="1"/><rect x="9" y="2" width="1" height="1"/><rect x="0" y="8" width="1" height="3"/><rect x="3" y="8" width="1" height="1"/><rect x="2" y="9" width="1" height="1"/><rect x="4" y="9" width="1" height="1"/><rect x="3" y="10" width="1" height="1"/><rect x="6" y="8" width="1" height="3"/><rect x="9" y="8" width="1" height="1"/><rect x="8" y="9" width="1" height="1"/><rect x="10" y="9" width="1" height="1"/><rect x="9" y="10" width="1" height="1"/><rect x="1" y="4" width="1" height="1"/><rect x="0" y="5" width="1" height="1"/><rect x="2" y="5" width="1" height="1"/><rect x="1" y="6" width="1" height="1"/><rect x="4" y="4" width="1" height="3"/><rect x="7" y="4" width="1" height="1"/><rect x="6" y="5" width="1" height="1"/><rect x="8" y="5" width="1" height="1"/><rect x="7" y="6" width="1" height="1"/><rect x="10" y="4" width="1" height="3"/></g></svg><span class="t" style="left:221px;top:221px;font-size:10.5px;color:#fff;letter-spacing:0.146px;transform:scaleY(1.19);transform-origin:0 10px;">Juneau Temperature</span><span class="t" style="left:371px;top:221px;font-size:10.5px;color:#fff;letter-spacing:0.056px;transform:scaleY(1.19);transform-origin:0 10px;">Variable</span><span class="t" style="left:451px;top:221px;font-size:10.5px;color:#fff;letter-spacing:0.001px;transform:scaleY(1.19);transform-origin:0 10px;">HasChildren</span><span class="t" style="left:631px;top:221px;font-size:10.5px;color:#fff;letter-spacing:0.256px;transform:scaleY(1.19);transform-origin:0 10px;">BaseType</span><svg style="left:193px;top:241px;" width="11" height="11" viewBox="0 0 11 11"><g fill="#000" shape-rendering="crispEdges"><rect x="0" y="0" width="1" height="3"/><rect x="3" y="0" width="1" height="1"/><rect x="2" y="1" width="1" height="1"/><rect x="4" y="1" width="1" height="1"/><rect x="3" y="2" width="1" height="1"/><rect x="6" y="0" width="1" height="3"/><rect x="9" y="0" width="1" height="1"/><rect x="8" y="1" width="1" height="1"/><rect x="10" y="1" width="1" height="1"/><rect x="9" y="2" width="1" height="1"/><rect x="0" y="8" width="1" height="3"/><rect x="3" y="8" width="1" height="1"/><rect x="2" y="9" width="1" height="1"/><rect x="4" y="9" width="1" height="1"/><rect x="3" y="10" width="1" height="1"/><rect x="6" y="8" width="1" height="3"/><rect x="9" y="8" width="1" height="1"/><rect x="8" y="9" width="1" height="1"/><rect x="10" y="9" width="1" height="1"/><rect x="9" y="10" width="1" height="1"/><rect x="1" y="4" width="1" height="1"/><rect x="0" y="5" width="1" height="1"/><rect x="2" y="5" width="1" height="1"/><rect x="1" y="6" width="1" height="1"/><rect x="4" y="4" width="1" height="3"/><rect x="7" y="4" width="1" height="1"/><rect x="6" y="5" width="1" height="1"/><rect x="8" y="5" width="1" height="1"/><rect x="7" y="6" width="1" height="1"/><rect x="10" y="4" width="1" height="3"/></g></svg><span class="t" style="left:222px;top:239px;font-size:10.5px;color:#000;letter-spacing:0.037px;transform:scaleY(1.19);transform-origin:0 10px;">Orlando Temperature</span><span class="t" style="left:371px;top:239px;font-size:10.5px;color:#000;letter-spacing:0.056px;transform:scaleY(1.19);transform-origin:0 10px;">Variable</span><span class="t" style="left:451px;top:239px;font-size:10.5px;color:#000;letter-spacing:0.001px;transform:scaleY(1.19);transform-origin:0 10px;">HasChildren</span><span class="t" style="left:631px;top:239px;font-size:10.5px;color:#000;letter-spacing:0.256px;transform:scaleY(1.19);transform-origin:0 10px;">BaseType</span><div style="left:182px;top:265px;width:10px;height:10px;background:#d6d3ce;border-top:1px solid #fff;border-left:1px solid #fff;border-right:1px solid #404040;border-bottom:1px solid #404040;"></div><div style="left:183px;top:266px;width:8px;height:8px;border-right:1px solid #808080;border-bottom:1px solid #808080;"></div><div style="left:184px;top:269px;width:5px;height:1px;background:#000;"></div><span class="t" style="left:197px;top:264px;font-size:10.5px;color:#000;letter-spacing:0.038px;transform:scaleY(1.19);transform-origin:0 10px;">HasChildren Object - 2 Item(s)</span><div style="left:179px;top:277px;width:594px;height:1px;background:#808080;"></div><svg style="left:190px;top:279px;" width="16" height="16" viewBox="0 0 16 16">
<defs><linearGradient id="wy" x1="0" y1="0" x2="1" y2="0.600"><stop offset="0" stop-color="#ffe878"/><stop offset="1" stop-color="#f0b020"/></linearGradient>
<linearGradient id="wp" x1="0" y1="0" x2="1" y2="0.600"><stop offset="0" stop-color="#ffb8fc"/><stop offset="1" stop-color="#e868e0"/></linearGradient>
<linearGradient id="wb" x1="0" y1="0" x2="1" y2="0.600"><stop offset="0" stop-color="#88c4ff"/><stop offset="1" stop-color="#2c78e0"/></linearGradient></defs>
<rect x="-3.200" y="-2.100" width="6.400" height="4.200" rx="0.5" transform="translate(7 11.900) rotate(-45)" fill="url(#wb)" stroke="#1c50c0" stroke-width="0.6"/>
<rect x="-3.150" y="-2.500" width="6.300" height="5" rx="0.5" transform="translate(12 7.700) rotate(45)" fill="url(#wp)" stroke="#b838b0" stroke-width="0.6"/>
<rect x="-4.050" y="-3.050" width="8.100" height="6.100" rx="1" transform="translate(4.900 4.950) rotate(-45)" fill="url(#wy)" stroke="#b88408" stroke-width="0.7"/>
</svg><span class="t" style="left:222px;top:280px;font-size:10.5px;color:#000;letter-spacing:-0.020px;transform:scaleY(1.19);transform-origin:0 10px;">GetCityForecastByZIP</span><span class="t" style="left:371px;top:280px;font-size:10.5px;color:#000;letter-spacing:0.174px;transform:scaleY(1.19);transform-origin:0 10px;">Object</span><span class="t" style="left:451px;top:280px;font-size:10.5px;color:#000;letter-spacing:0.001px;transform:scaleY(1.19);transform-origin:0 10px;">HasChildren</span><span class="t" style="left:631px;top:280px;font-size:10.5px;color:#000;letter-spacing:0.256px;transform:scaleY(1.19);transform-origin:0 10px;">BaseType</span><svg style="left:190px;top:297px;" width="16" height="16" viewBox="0 0 16 16">
<defs><linearGradient id="wy" x1="0" y1="0" x2="1" y2="0.600"><stop offset="0" stop-color="#ffe878"/><stop offset="1" stop-color="#f0b020"/></linearGradient>
<linearGradient id="wp" x1="0" y1="0" x2="1" y2="0.600"><stop offset="0" stop-color="#ffb8fc"/><stop offset="1" stop-color="#e868e0"/></linearGradient>
<linearGradient id="wb" x1="0" y1="0" x2="1" y2="0.600"><stop offset="0" stop-color="#88c4ff"/><stop offset="1" stop-color="#2c78e0"/></linearGradient></defs>
<rect x="-3.200" y="-2.100" width="6.400" height="4.200" rx="0.5" transform="translate(7 11.900) rotate(-45)" fill="url(#wb)" stroke="#1c50c0" stroke-width="0.6"/>
<rect x="-3.150" y="-2.500" width="6.300" height="5" rx="0.5" transform="translate(12 7.700) rotate(45)" fill="url(#wp)" stroke="#b838b0" stroke-width="0.6"/>
<rect x="-4.050" y="-3.050" width="8.100" height="6.100" rx="1" transform="translate(4.900 4.950) rotate(-45)" fill="url(#wy)" stroke="#b88408" stroke-width="0.7"/>
</svg><span class="t" style="left:222px;top:298px;font-size:10.5px;color:#000;letter-spacing:0.081px;transform:scaleY(1.19);transform-origin:0 10px;">GetCityWeatherByZIP</span><span class="t" style="left:371px;top:298px;font-size:10.5px;color:#000;letter-spacing:0.174px;transform:scaleY(1.19);transform-origin:0 10px;">Object</span><span class="t" style="left:451px;top:298px;font-size:10.5px;color:#000;letter-spacing:0.001px;transform:scaleY(1.19);transform-origin:0 10px;">HasChildren</span><span class="t" style="left:631px;top:298px;font-size:10.5px;color:#000;letter-spacing:0.256px;transform:scaleY(1.19);transform-origin:0 10px;">BaseType</span><div style="left:11px;top:453px;width:766px;height:20px;background:#d8def2;border:1px solid #bcc4dc;border-radius:3px;"></div><span class="t" style="left:14px;top:458px;font-size:10.5px;color:#4a5466;letter-spacing:0.072px;transform:scaleY(1.19);transform-origin:0 10px;">Status Panel</span><svg style="left:764px;top:458px;" width="8" height="10" viewBox="0 0 8 10"><path d="M2 0.500h4M2.500 0.500v4.500M5.500 0.500v4.500M0.500 5.500h7M4 5.500v4" stroke="#404858" stroke-width="1" fill="none"/><rect x="4.500" y="1" width="1.500" height="4" fill="#404858"/></svg><div style="left:13px;top:476px;width:762px;height:65px;background:#fff;border-top:1px solid #808080;border-left:1px solid #808080;border-right:1px solid #fff;border-bottom:1px solid #fff;"></div><div style="left:14px;top:477px;width:760px;height:63px;border-top:1px solid #404040;border-left:1px solid #404040;border-right:1px solid #d6d3ce;border-bottom:1px solid #d6d3ce;"></div><div style="left:15px;top:478px;width:742px;height:61px;overflow:hidden"><span class="t" style="left:6px;top:3px;font-size:10.5px;color:#000;letter-spacing:0.177px;transform:scaleY(1.19);transform-origin:0 10px;">Selected node point name "".</span><span class="t" style="left:6px;top:20px;font-size:10.5px;color:#000;letter-spacing:-0.001px;transform:scaleY(1.19);transform-origin:0 10px;">Number of neighbors: 12.</span><span class="t" style="left:6px;top:37px;font-size:10.5px;color:#000;letter-spacing:0.177px;transform:scaleY(1.19);transform-origin:0 10px;">Selected node point name "".</span><span class="t" style="left:6px;top:54px;font-size:10.5px;color:#000;letter-spacing:-0.144px;transform:scaleY(1.19);transform-origin:0 10px;">Number of neighbors: 1.</span></div><div style="left:757px;top:478px;width:16px;height:61px;background:repeating-conic-gradient(#fff 0% 25%, #d6d3ce 0% 50%) 0 0/2px 2px;"></div><div style="left:757px;top:478px;width:16px;height:16px;background:#d6d3ce;border-top:1px solid #d6d3ce;border-left:1px solid #d6d3ce;border-right:1px solid #404040;border-bottom:1px solid #404040;"></div><div style="left:758px;top:479px;width:14px;height:14px;border-top:1px solid #fff;border-left:1px solid #fff;border-right:1px solid #808080;border-bottom:1px solid #808080;"></div><svg style="left:761px;top:484px;" width="8" height="4" viewBox="0 0 8 4"><path d="M0.500 4h7l-3.500 -4z" fill="#000"/></svg><div style="left:757px;top:494px;width:16px;height:8px;background:#d6d3ce;border-top:1px solid #d6d3ce;border-left:1px solid #d6d3ce;border-right:1px solid #404040;border-bottom:1px solid #404040;"></div><div style="left:758px;top:495px;width:14px;height:6px;border-top:1px solid #fff;border-left:1px solid #fff;border-right:1px solid #808080;border-bottom:1px solid #808080;"></div><div style="left:757px;top:523px;width:16px;height:16px;background:#d6d3ce;border-top:1px solid #d6d3ce;border-left:1px solid #d6d3ce;border-right:1px solid #404040;border-bottom:1px solid #404040;"></div><div style="left:758px;top:524px;width:14px;height:14px;border-top:1px solid #fff;border-left:1px solid #fff;border-right:1px solid #808080;border-bottom:1px solid #808080;"></div><svg style="left:761px;top:529px;" width="8" height="4" viewBox="0 0 8 4"><path d="M0.500 0h7l-3.500 4z" fill="#000"/></svg><div style="left:546px;top:556px;width:75px;height:23px;background:#000;"></div><div style="left:547px;top:557px;width:73px;height:21px;background:#d6d3ce;border-top:1px solid #fff;border-left:1px solid #fff;border-right:1px solid #404040;border-bottom:1px solid #404040;"></div><div style="left:548px;top:558px;width:71px;height:19px;border-right:1px solid #808080;border-bottom:1px solid #808080;"></div><span class="t" style="left:576px;top:561px;font-size:10.5px;color:#000;letter-spacing:-0.017px;transform:scaleY(1.19);transform-origin:0 10px;">OK</span><div style="left:626px;top:556px;width:75px;height:23px;background:#d6d3ce;border-top:1px solid #fff;border-left:1px solid #fff;border-right:1px solid #404040;border-bottom:1px solid #404040;"></div><div style="left:627px;top:557px;width:73px;height:21px;border-right:1px solid #808080;border-bottom:1px solid #808080;"></div><span class="t" style="left:647px;top:561px;font-size:10.5px;color:#000;letter-spacing:0.400px;transform:scaleY(1.19);transform-origin:0 10px;">Cancel</span><div style="left:706px;top:556px;width:75px;height:23px;background:#d6d3ce;border-top:1px solid #fff;border-left:1px solid #fff;border-right:1px solid #404040;border-bottom:1px solid #404040;"></div><div style="left:707px;top:557px;width:73px;height:21px;border-right:1px solid #808080;border-bottom:1px solid #808080;"></div><span class="t" style="left:732px;top:561px;font-size:10.5px;color:#000;letter-spacing:0.498px;transform:scaleY(1.19);transform-origin:0 10px;">Help</span><svg style="left:772px;top:570px;" width="14" height="14" viewBox="0 0 14 14"><path d="M13.500 1L1 13.500M13.500 5L5 13.500M13.500 9L9 13.500" stroke="#808080" stroke-width="1.400"/><path d="M13.500 0L0 13.500M13.500 4L4 13.500M13.500 8L8 13.500" stroke="#fff" stroke-width="0.8"/></svg><div style="left:0px;top:587px;width:788px;height:1px;background:#808080;"></div><div style="left:0px;top:588px;width:788px;height:1px;background:#404040;"></div><div style="left:0px;top:589px;width:788px;height:1px;background:#fff;"></div>
</body></html>
